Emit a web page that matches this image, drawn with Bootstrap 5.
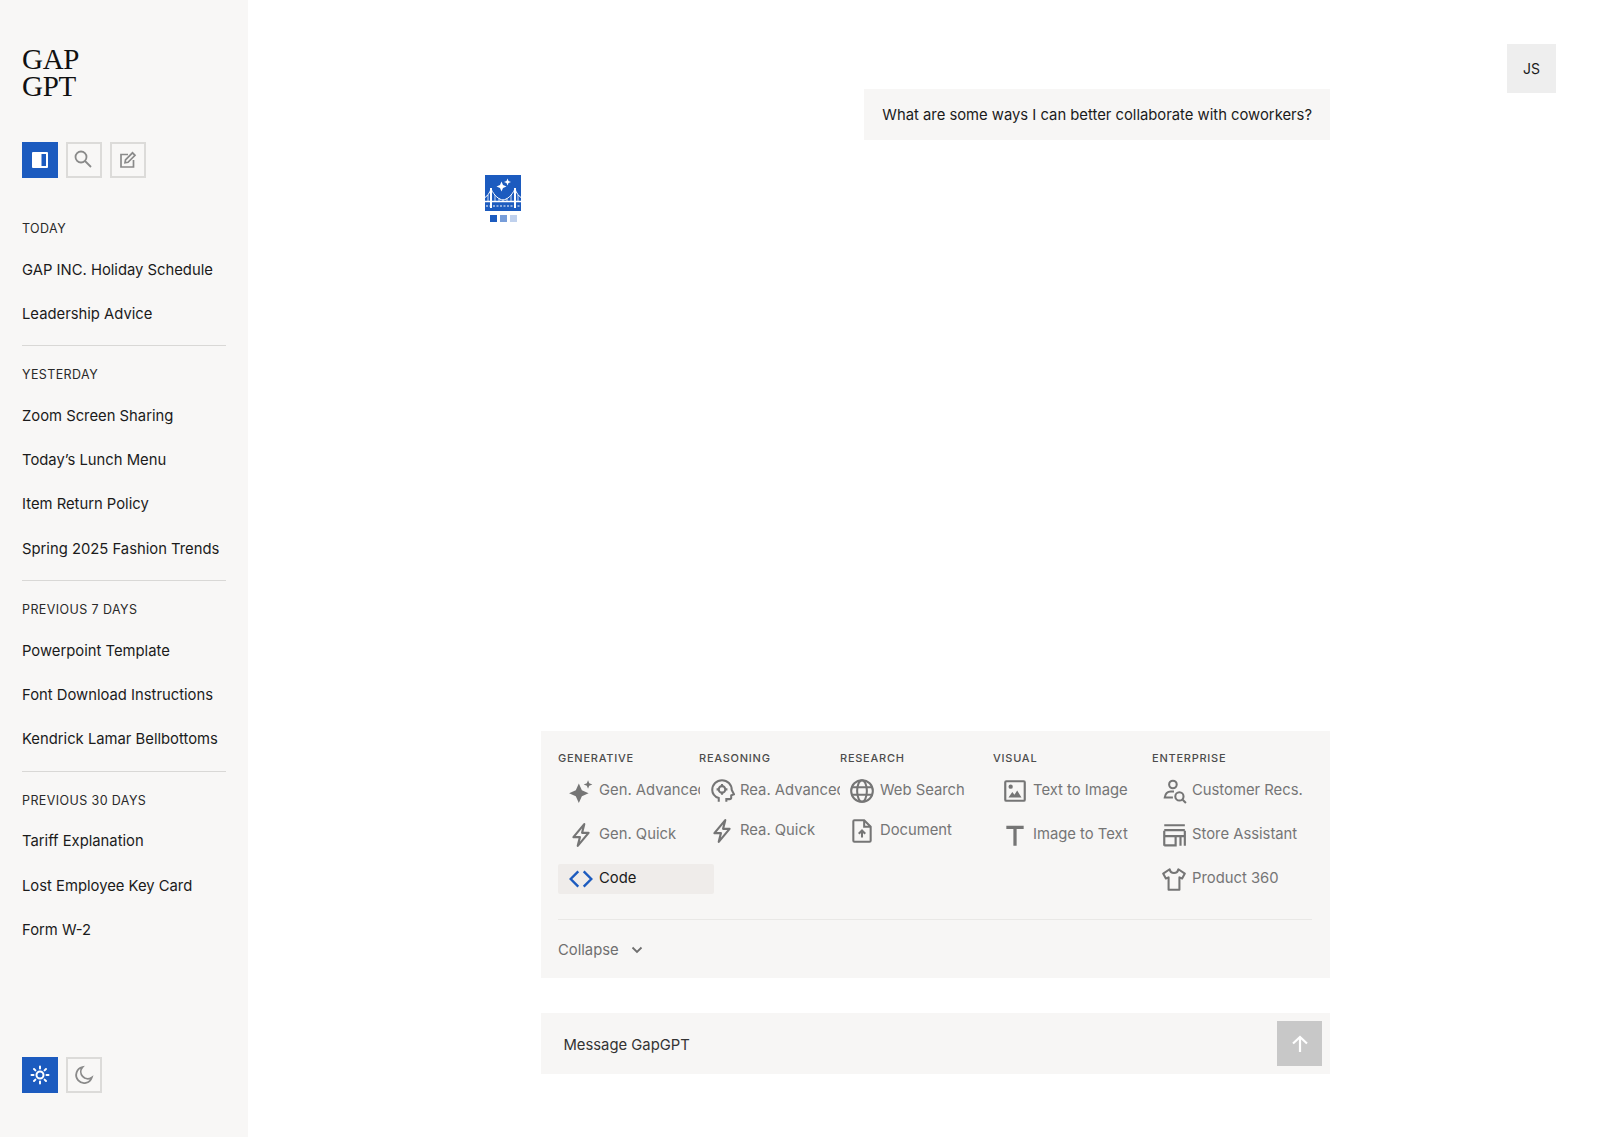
<!DOCTYPE html>
<html lang="en">
<head>
<meta charset="UTF-8">
<title>GapGPT</title>
<link href="https://cdn.jsdelivr.net/npm/bootstrap@5.3.0/dist/css/bootstrap.min.css" rel="stylesheet">
<style>
    body { background: #fff; color: #1b1b1b; font-family: Inter, "Liberation Sans", sans-serif; font-size: 14.8px; }
    .app-shell { height: 1137px; overflow: hidden; }

    .side { width: 248px; flex: none; background: #f8f7f6; padding: 46px 22px 44px; }
    .brand { font-family: "Liberation Serif", serif; font-size: 29px; line-height: 26.5px; color: #111; letter-spacing: -.3px; }
    .tool-row { margin-top: 43px; }
    .sq { width: 36px; height: 36px; padding: 0; border-radius: 0; border: 2px solid #dcdbd9; background: transparent; color: #8a8a8a; display: flex; align-items: center; justify-content: center; }
    .sq.on { background: #1c5bbf; border-color: #1c5bbf; color: #fff; }
    .hist { margin-top: 41px; }
    .hist-label { font-size: 12.5px; line-height: 20px; letter-spacing: .4px; color: #2a2a2a; text-transform: uppercase; margin-bottom: 8.500px; }
    .hist-link { display: block; color: #1b1b1b; text-decoration: none; font-size: 14.8px; line-height: 44.3px; white-space: nowrap; }
    .hist-sep { border: 0; border-top: 1px solid #d9d8d6; opacity: 1; width: 204px; margin: 9px 0 19.200px; }

    .main-col { padding-left: 237px; position: relative; }
    .avatar { position: absolute; top: 44px; right: 44px; width: 49px; height: 49px; background: #eeeeee; font-size: 14px; }
    .chat { width: 845px; height: 100%; padding: 89px 0 63px; }
    .bubble { background: #f7f6f5; padding: 16px 18px 14px; height: 51px; line-height: 21px; font-size: 14.8px; white-space: nowrap; }
    .bot { margin-top: 35px; width: 36px; }
    .dots { gap: 3px; margin-top: 4px; padding-left: 5px; }
    .dots i { width: 7px; height: 7px; display: block; background: #1c5bbf; }
    .dots i:nth-child(2) { opacity: .6; }
    .dots i:nth-child(3) { opacity: .28; }

    .picker { width: 789px; height: 247px; background: #f7f6f5; padding: 19px 18px 0 17px; }
    .pick-title { font-size: 11px; line-height: 16px; letter-spacing: .75px; color: #4c4c4c; text-transform: uppercase; font-weight: 500; white-space: nowrap; margin-bottom: 9.500px; }
    .pick-col { flex: none; }
    .w141 { width: 141px; }
    .w143 { width: 142px; margin-right: -1px; }
    .w153 { width: 153px; }
    .w159 { width: 159px; }
    .pick-item { display: flex; align-items: center; height: 30px; margin-bottom: 14px; color: #757575; font-size: 14.8px; white-space: nowrap; overflow: hidden; }
    .pick-item svg { flex: none; width: 26px; height: 26px; margin: 0 5px 0 9px; }
    .pick-col.tight .pick-item { margin-bottom: 10px; }
    .w141 .pick-item svg, .w143 .pick-item svg { margin-left: 10px; }
    .pick-item.sel { width: 156px; overflow: visible; background: #efecea; color: #1b1b1b; border-radius: 2px; }
    .pick-rule { border: 0; border-top: 1px solid #e9e8e6; opacity: 1; margin: 11.500px 0 19.500px; }
    .collapse-btn { color: #6f6f6f; font-size: 14.8px; line-height: 20px; gap: 11px; }

    .composer { width: 789px; height: 61px; margin-top: 35px; background: #f7f6f5; padding: 0 8px 0 22.500px; font-size: 14.8px; color: #333; }
    .send { width: 45px; height: 45px; background: #c8c8c8; border: 0; border-radius: 0; padding: 0; color: #fff; display: flex; align-items: center; justify-content: center; }
</style>
</head>
<body>
<div class="app-shell d-flex">

    <aside class="side d-flex flex-column">
        <div class="brand">GAP<br>GPT</div>

        <div class="tool-row d-flex gap-2">
            <button class="sq on" aria-label="Toggle sidebar">
                <svg width="16" height="16" viewBox="0 0 16 16"><rect width="16" height="16" rx="1" fill="#fff"/><rect x="9.5" y="2" width="4.5" height="12" fill="#1c5bbf"/></svg>
            </button>
            <button class="sq" aria-label="Search">
                <svg width="20" height="20" viewBox="0 0 20 20" fill="none" stroke="currentColor" stroke-width="1.8" style="margin:-3px 0 0 -3px"><circle cx="8" cy="8" r="5.5"/><path d="M12 12l6 6"/></svg>
            </button>
            <button class="sq" aria-label="New chat">
                <svg width="18" height="18" viewBox="0 0 18 18" fill="none" stroke="currentColor" stroke-width="1.7"><path d="M9 3.5H2v12.5h12.500V9"/><path d="M6.500 8.800L13.500 1.800l2.500 2.500-7 7-3 .5z"/></svg>
            </button>
        </div>

        <div class="hist">
            <div class="hist-label">Today</div>
            <a class="hist-link" href="#">GAP INC. Holiday Schedule</a>
            <a class="hist-link" href="#">Leadership Advice</a>
            <hr class="hist-sep">
            <div class="hist-label">Yesterday</div>
            <a class="hist-link" href="#">Zoom Screen Sharing</a>
            <a class="hist-link" href="#">Today’s Lunch Menu</a>
            <a class="hist-link" href="#">Item Return Policy</a>
            <a class="hist-link" href="#">Spring 2025 Fashion Trends</a>
            <hr class="hist-sep">
            <div class="hist-label">Previous 7 days</div>
            <a class="hist-link" href="#">Powerpoint Template</a>
            <a class="hist-link" href="#">Font Download Instructions</a>
            <a class="hist-link" href="#">Kendrick Lamar Bellbottoms</a>
            <hr class="hist-sep">
            <div class="hist-label">Previous 30 days</div>
            <a class="hist-link" href="#">Tariff Explanation</a>
            <a class="hist-link" href="#">Lost Employee Key Card</a>
            <a class="hist-link" href="#">Form W-2</a>
        </div>

        <div class="d-flex gap-2 mt-auto">
            <button class="sq on" aria-label="Light mode">
                <svg width="20" height="20" viewBox="0 0 20 20" fill="none" stroke="currentColor" stroke-width="2" stroke-linecap="round"><circle cx="10" cy="10" r="3.500"/><path d="M10 1.500v2M10 16.500v2M1.500 10h2M16.500 10h2M4 4l1.400 1.400M14.600 14.600L16 16M4 16l1.400-1.400M14.600 5.400L16 4"/></svg>
            </button>
            <button class="sq" aria-label="Dark mode">
                <svg width="20" height="20" viewBox="0 0 20 20" fill="none" stroke="currentColor" stroke-width="1.800"><path d="M8.500 2.200a8 8 0 1 0 9.300 10.300A7 7 0 0 1 8.500 2.200z"/></svg>
            </button>
        </div>
    </aside>

    <main class="main-col flex-grow-1">
        <div class="avatar d-flex align-items-center justify-content-center">JS</div>

        <div class="chat d-flex flex-column">
            <div class="bubble align-self-end">What are some ways I can better collaborate with coworkers?</div>

            <div class="bot">
                <svg width="36" height="36" viewBox="0 0 36 36" class="d-block">
                    <rect width="36" height="36" fill="#1c5bbf"/>
                    <path fill="#fff" d="M16.500 6.500l1.500 3.500 3.500 1.500-3.500 1.500-1.500 3.500-1.500-3.500-3.500-1.500 3.500-1.500zM22.500 3.500l1 2.500 2.500 1-2.500 1-1 2.500-1-2.500-2.500-1 2.500-1z"/>
                    <g fill="none" stroke="#fff">
                        <path stroke-width="2" d="M6 13v20M30 13v20"/>
                        <path stroke-width="1" d="M0 22.500C2.500 21 4.500 18 6 14 9.500 21 14 24.500 18 25 22 24.500 26.500 21 30 14 31.500 18 33.500 21 36 22.500"/>
                        <path stroke-width="1.500" d="M0 26.500h36"/>
                        <path stroke-width=".8" d="M10 20v6M14 23v3M18 24.500v2M22 23v3M26 20v6M3 20v6M33 20v6"/>
                        <path stroke-width="1" stroke-dasharray="2 1.500" d="M1 31h34"/>
                    </g>
                </svg>
                <div class="dots d-flex"><i></i><i></i><i></i></div>
            </div>

            <div class="picker mt-auto align-self-end">
                <div class="d-flex">
                    <div class="pick-col w143">
                        <div class="pick-title">Generative</div>
                        <div class="pick-item"><svg viewBox="0 0 24 24" fill="#757575"><path d="M10 5l2.800 6.200L19 14l-6.200 2.800L10 23l-2.800-6.200L1 14l6.200-2.800zM18.500 2l1.100 2.900 2.900 1.100-2.900 1.100-1.100 2.900-1.100-2.900-2.900-1.100 2.900-1.100z"/></svg>Gen. Advanced</div>
                        <div class="pick-item"><svg viewBox="0 0 24 24" fill="none" stroke="#757575" stroke-width="2" stroke-linejoin="round"><path d="M15 2L5 14h6l-2 8 10-12h-6z"/></svg>Gen. Quick</div>
                        <div class="pick-item sel"><svg viewBox="0 0 24 24" fill="none" stroke="#1c5bbf" stroke-width="2.200"><path d="M9.500 5L2.500 12l7 7M14.500 5l7 7-7 7"/></svg>Code</div>
                    </div>
                    <div class="pick-col w141 tight">
                        <div class="pick-title">Reasoning</div>
                        <div class="pick-item"><svg viewBox="0 0 24 24" fill="none" stroke="#757575" stroke-width="1.900"><path d="M9 22v-3.500C5 17 3 14.500 3 11 3 6 7 2 12 2s9 4 9 9l2 4-2.500 1v2a1.500 1.500 0 0 1-1.500 1.500h-3V22"/><circle cx="12" cy="10.500" r="3"/><path d="M12 5.500v2M12 13.500v2M7 10.500h2M15 10.500h2"/></svg>Rea. Advanced</div>
                        <div class="pick-item"><svg viewBox="0 0 24 24" fill="none" stroke="#757575" stroke-width="2" stroke-linejoin="round"><path d="M15 2L5 14h6l-2 8 10-12h-6z"/></svg>Rea. Quick</div>
                    </div>
                    <div class="pick-col w153 tight">
                        <div class="pick-title">Research</div>
                        <div class="pick-item"><svg viewBox="0 0 24 24" fill="none" stroke="#757575" stroke-width="1.900"><circle cx="12" cy="12" r="10"/><ellipse cx="12" cy="12" rx="4.500" ry="10"/><path d="M2.500 8.500h19M2.500 15.500h19"/></svg>Web Search</div>
                        <div class="pick-item"><svg viewBox="0 0 24 24" fill="none" stroke="#757575" stroke-width="1.900"><path d="M14 2H5a1 1 0 0 0-1 1v18a1 1 0 0 0 1 1h14a1 1 0 0 0 1-1V8z"/><path d="M14 2v6h6M12 18v-6M9 14.500l3-3 3 3"/></svg>Document</div>
                    </div>
                    <div class="pick-col w159">
                        <div class="pick-title">Visual</div>
                        <div class="pick-item"><svg viewBox="0 0 24 24" fill="none" stroke="#757575" stroke-width="2"><rect x="3" y="3" width="18" height="18" rx="1"/><circle cx="8" cy="8" r="1" fill="#757575"/><path fill="#757575" stroke="none" d="M6 18l3.500-5 2 2.500 2.500-4 4 6.500z"/></svg>Text to Image</div>
                        <div class="pick-item"><svg viewBox="0 0 24 24" fill="none" stroke="#757575" stroke-width="3"><path d="M4 5h16M12 5v17"/></svg>Image to Text</div>
                    </div>
                    <div class="pick-col">
                        <div class="pick-title">Enterprise</div>
                        <div class="pick-item"><svg viewBox="0 0 24 24" fill="none" stroke="#757575" stroke-width="1.900"><circle cx="11" cy="6" r="3.500"/><path d="M12 12.500H9c-3 0-5 2-5.500 5.500H11"/><circle cx="17" cy="17" r="3.800"/><path d="M20 20l3 3"/></svg>Customer Recs.</div>
                        <div class="pick-item"><svg viewBox="0 0 24 24" fill="none" stroke="#757575" stroke-width="2"><path d="M3 3h19M3 7.500h19M3 8v14M22 8v14M3 13h19M3 21.500h10.500V13M18 13v9"/></svg>Store Assistant</div>
                        <div class="pick-item"><svg viewBox="0 0 24 24" fill="none" stroke="#757575" stroke-width="1.900" stroke-linejoin="round"><path d="M8 3l-6 4 2.500 4.500L7 10.500V22h10V10.500l2.500 1L22 7l-6-4c-.5 2.500-2 3.500-4 3.500S8.500 5.500 8 3z"/></svg>Product 360</div>
                    </div>
                </div>
                <hr class="pick-rule">
                <div class="collapse-btn d-flex align-items-center">Collapse
                    <svg width="14" height="14" viewBox="0 0 14 14" fill="none" stroke="currentColor" stroke-width="1.800"><path d="M2.500 4.500L7 9l4.500-4.500"/></svg>
                </div>
            </div>

            <div class="composer align-self-end d-flex align-items-center justify-content-between">
                <span class="pt-1">Message GapGPT</span>
                <button class="send" aria-label="Send">
                    <svg width="20" height="20" viewBox="0 0 20 20" fill="none" stroke="currentColor" stroke-width="2.200"><path d="M10 18V3M3 9.500L10 3l7 6.500"/></svg>
                </button>
            </div>
        </div>
    </main>

</div>
<script src="https://cdn.jsdelivr.net/npm/bootstrap@5.3.0/dist/js/bootstrap.bundle.min.js"></script>
</body>
</html>
